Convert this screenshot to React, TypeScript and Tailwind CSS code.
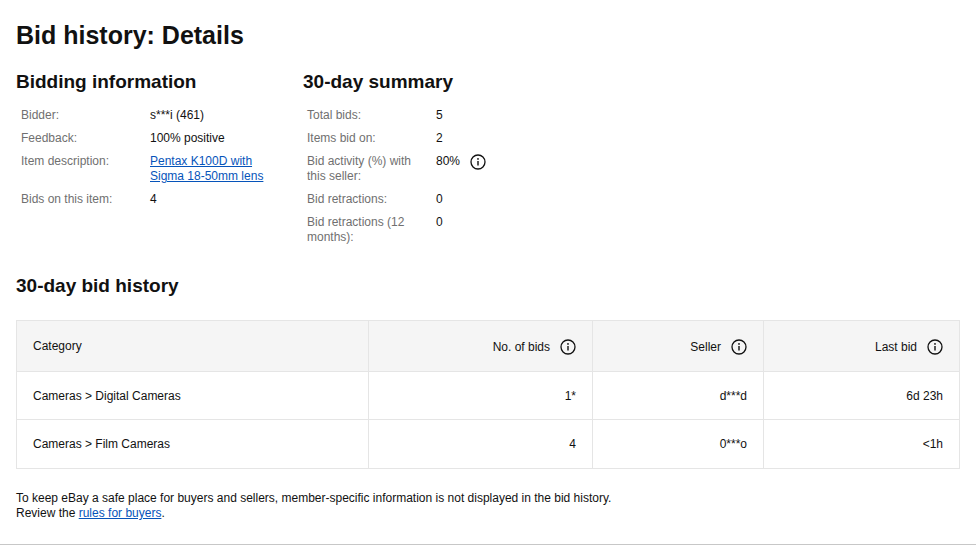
import React from "react";

const Info = () => (
  <svg width="16" height="16" viewBox="0 0 16 16" className="inline-block shrink-0">
    <circle cx="8" cy="8" r="7" fill="none" stroke="#111" strokeWidth="1.3" />
    <rect x="7.3" y="7" width="1.4" height="4.5" fill="#111" />
    <circle cx="8" cy="4.9" r="0.9" fill="#111" />
  </svg>
);

const Row = ({ l, v, lw, i }: { l: string; v: React.ReactNode; lw: string; i?: boolean }) => (
  <div className="flex text-[12px] leading-[15px] mb-[8px]">
    <div className={`${lw} shrink-0 text-[#707070] pr-2`}>{l}</div>
    <div className="text-[#111] flex items-start gap-[10px]">{v}{i && <Info />}</div>
  </div>
);

export default function App() {
  return (
    <div className="w-[976px] h-[550px] bg-white text-[#111] relative" style={{ fontFamily: '"Liberation Sans", Arial, sans-serif' }}>
      <div className="px-[16px] pt-[21px]">
        <h1 className="text-[25px] font-bold leading-[28px]">Bid history: Details</h1>
        <div className="flex mt-[21px]">
          <div className="w-[287px]">
            <h2 className="text-[19px] font-bold leading-[24px] mb-[14px]">Bidding information</h2>
            <div className="pl-[5px]">
              <Row lw="w-[129px]" l="Bidder:" v="s***i (461)" />
              <Row lw="w-[129px]" l="Feedback:" v="100% positive" />
              <Row lw="w-[129px]" l="Item description:" v={<a className="text-[#0654ba] underline w-[125px] block">Pentax K100D with Sigma 18-50mm lens</a>} />
              <Row lw="w-[129px]" l="Bids on this item:" v="4" />
            </div>
          </div>
          <div>
            <h2 className="text-[19px] font-bold leading-[24px] mb-[14px]">30-day summary</h2>
            <div className="pl-[4px]">
              <Row lw="w-[129px]" l="Total bids:" v="5" />
              <Row lw="w-[129px]" l="Items bid on:" v="2" />
              <Row lw="w-[129px]" l="Bid activity (%) with this seller:" v="80%" i />
              <Row lw="w-[129px]" l="Bid retractions:" v="0" />
              <Row lw="w-[129px]" l="Bid retractions (12 months):" v="0" />
            </div>
          </div>
        </div>
        <h2 className="text-[19px] font-bold leading-[24px] mt-[21px]">30-day bid history</h2>
        <table className="mt-[22px] w-[944px] border-collapse text-[12px]">
          <thead>
            <tr className="bg-[#f5f5f5] h-[51px]">
              <th className="border border-[#e5e5e5] w-[352px] text-left font-normal pl-[16px]">Category</th>
              <th className="border border-[#e5e5e5] w-[224px] font-normal pr-[16px]"><div className="flex justify-end items-center gap-[10px] pt-[2px]">No. of bids <Info /></div></th>
              <th className="border border-[#e5e5e5] w-[171px] font-normal pr-[16px]"><div className="flex justify-end items-center gap-[10px] pt-[2px]">Seller <Info /></div></th>
              <th className="border border-[#e5e5e5] font-normal pr-[16px]"><div className="flex justify-end items-center gap-[10px] pt-[2px]">Last bid <Info /></div></th>
            </tr>
          </thead>
          <tbody>
            <tr className="h-[48px]">
              <td className="border border-[#e5e5e5] pl-[16px]">Cameras &gt; Digital Cameras</td>
              <td className="border border-[#e5e5e5] text-right pr-[16px]">1*</td>
              <td className="border border-[#e5e5e5] text-right pr-[16px]">d***d</td>
              <td className="border border-[#e5e5e5] text-right pr-[16px]">6d 23h</td>
            </tr>
            <tr className="h-[49px]">
              <td className="border border-[#e5e5e5] pl-[16px]">Cameras &gt; Film Cameras</td>
              <td className="border border-[#e5e5e5] text-right pr-[16px]">4</td>
              <td className="border border-[#e5e5e5] text-right pr-[16px]">0***o</td>
              <td className="border border-[#e5e5e5] text-right pr-[16px]">&lt;1h</td>
            </tr>
          </tbody>
        </table>
        <p className="text-[12px] leading-[15px] mt-[22px] w-[600px]">
          To keep eBay a safe place for buyers and sellers, member-specific information is not displayed in the bid history. Review the <a className="text-[#0654ba] underline">rules for buyers</a>.
        </p>
      </div>
      <div className="absolute left-0 right-0 top-[544px] border-t border-[#c7c7c7]" />
    </div>
  );
}
